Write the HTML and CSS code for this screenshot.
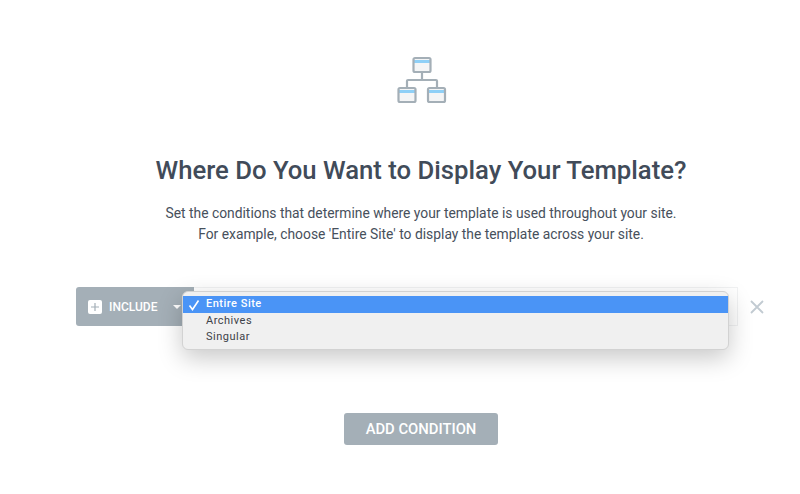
FILE: index.html
```html
<!DOCTYPE html>
<html lang="en">
<head>
<meta charset="utf-8">
<title>Display Conditions</title>
<link rel="stylesheet" href="styles.css">
</head>
<body>
<main class="page">
  <svg class="hero-icon" width="50" height="48" viewBox="0 0 50 48" fill="none">
    <g class="icon-fill">
      <rect x="16.5" y="2" width="17" height="14" rx="1.5" fill="#f4f5f6"/>
      <rect x="1.5" y="32" width="17" height="14" rx="1.5" fill="#f4f5f6"/>
      <rect x="31" y="32" width="17" height="14" rx="1.5" fill="#f4f5f6"/>
      <rect x="17" y="4" width="16" height="3" fill="#8fd0f7"/>
      <rect x="2" y="34" width="16" height="3" fill="#8fd0f7"/>
      <rect x="31.5" y="34" width="16" height="3" fill="#8fd0f7"/>
    </g>
    <g stroke="#a4afb7" stroke-width="2.2">
      <rect x="16.5" y="2" width="17" height="14" rx="1.5"/>
      <rect x="1.5" y="32" width="17" height="14" rx="1.5"/>
      <rect x="31" y="32" width="17" height="14" rx="1.5"/>
      <path d="M25 16v8M10 32v-7a1 1 0 0 1 1-1h28a1 1 0 0 1 1 1v7"/>
    </g>
  </svg>
  <h1 class="title">Where Do You Want to Display Your Template?</h1>
  <p class="intro">Set the conditions that determine where your template is used throughout your site.<br>For example, choose 'Entire Site' to display the template across your site.</p>
  <div class="condition">
    <div class="include">
      <span class="plus-box">
        <svg width="8" height="8" viewBox="0 0 8 8"><path d="M4 0v8M0 4h8" stroke="#a4afb7" stroke-width="1.2"/></svg>
      </span>
      <span class="include-label">INCLUDE</span>
      <span class="caret"></span>
    </div>
    <div class="select-field"></div>
    <svg class="remove" width="14" height="14" viewBox="0 0 14 14"><path d="M1 1l12 12M13 1L1 13" stroke="#c2cbd2" stroke-width="1.8"/></svg>
    <ul class="menu">
      <li class="menu-item selected"><svg class="check" width="12" height="12" viewBox="0 0 12 12" fill="none"><path d="M1.5 6.5l3 4 6-9" stroke="#fff" stroke-width="1.6"/></svg>Entire Site</li>
      <li class="menu-item">Archives</li>
      <li class="menu-item">Singular</li>
    </ul>
  </div>
  <button class="add" type="button">ADD CONDITION</button>
</main>
</body>
</html>
```
FILE: styles.css
```css
* { box-sizing: border-box; }
html, body { margin: 0; height: 100%; background: #fff; overflow: hidden; }
.page {
  display: flex;
  flex-direction: column;
  align-items: center;
  padding: 56px 0 0 42px;
  font-family: Roboto, sans-serif;
}
.hero-icon { display: block; margin-left: 2px; }
.title {
  margin: 51px 0 0;
  font-size: 25.7px;
  line-height: 30px;
  font-weight: 500;
  color: #414b59;
}
.intro {
  margin: 18px 0 0;
  font-size: 13.85px;
  line-height: 21px;
  text-align: center;
  color: #47505c;
}
.condition {
  position: relative;
  display: flex;
  align-items: center;
  align-self: flex-start;
  margin: 42px 0 0 34px;
}
.include {
  display: flex;
  align-items: center;
  width: 118px;
  height: 39px;
  padding-left: 12px;
  background: #a4afb7;
  border-radius: 3px 0 0 3px;
  color: #fff;
}
.plus-box {
  display: flex;
  align-items: center;
  justify-content: center;
  width: 14px;
  height: 14px;
  background: #fff;
  border-radius: 2px;
}
.include-label { margin-left: 7px; font-size: 12px; font-weight: 500; }
.caret {
  margin-left: 16px;
  border-left: 4px solid transparent;
  border-right: 4px solid transparent;
  border-top: 4px solid #fff;
}
.select-field {
  width: 544px;
  height: 39px;
  background: #fff;
  border: 1px solid #f1f2f3;
  border-left: 0;
}
.remove { margin-left: 12px; }
.menu {
  position: absolute;
  left: 106px;
  top: 4px;
  width: 547px;
  height: 59px;
  margin: 0;
  padding: 4px 0;
  list-style: none;
  background: #f0f0f0;
  border: 1px solid #d2d2d2;
  border-radius: 6px;
  box-shadow: 0 8px 24px rgba(0, 0, 0, .22);
  font-size: 11px;
  letter-spacing: .5px;
  color: #3d4248;
}
.menu-item {
  position: relative;
  height: 16.5px;
  line-height: 16.5px;
  padding-left: 23px;
}
.selected { background: #4a94f6; color: #fff; font-weight: 500; }
.check { position: absolute; left: 5px; top: 3px; }
.add {
  margin-top: 87px;
  width: 154px;
  height: 32px;
  padding: 0;
  border: 0;
  border-radius: 3px;
  background: #a4afb7;
  color: #fff;
  font-family: Roboto, sans-serif;
  font-size: 14.8px;
  font-weight: 500;
}
```
